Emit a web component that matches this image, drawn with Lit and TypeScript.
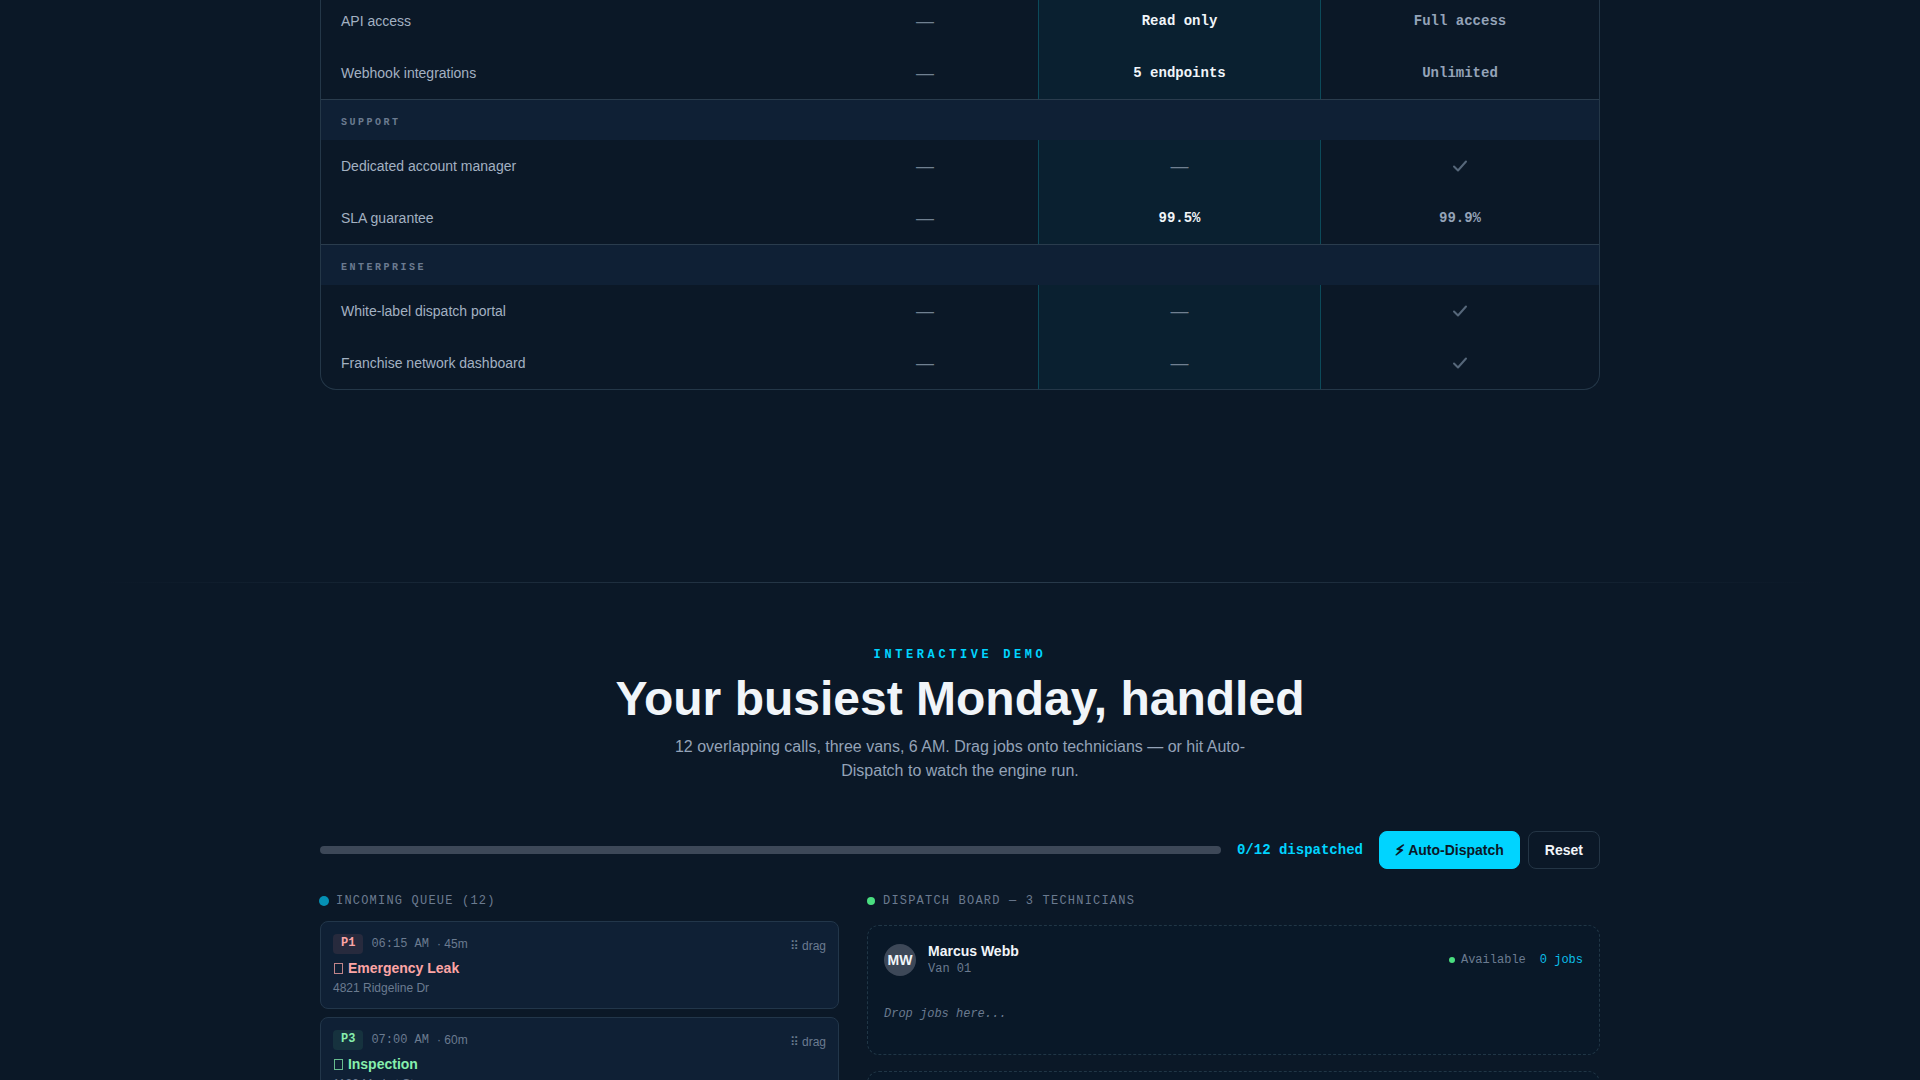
import { LitElement, html, css, svg } from "lit";
import { customElement, property, state } from "lit/decorators.js";
import { classMap } from "lit/directives/class-map.js";

type Row = { label: string; values: string[] };
type Group = { title?: string; rows: Row[] };
type Job = { priority: string; time: string; duration: string; title: string; address: string };
type Tech = { initials: string; name: string; van: string };

const GROUPS: Group[] = [
  {
    rows: [
      { label: "API access", values: ["—", "Read only", "Full access"] },
      { label: "Webhook integrations", values: ["—", "5 endpoints", "Unlimited"] },
    ],
  },
  {
    title: "Support",
    rows: [
      { label: "Dedicated account manager", values: ["—", "—", "check"] },
      { label: "SLA guarantee", values: ["—", "99.5%", "99.9%"] },
    ],
  },
  {
    title: "Enterprise",
    rows: [
      { label: "White-label dispatch portal", values: ["—", "—", "check"] },
      { label: "Franchise network dashboard", values: ["—", "—", "check"] },
    ],
  },
];

const JOBS: Job[] = [
  { priority: "P1", time: "06:15 AM", duration: "45m", title: "Emergency Leak", address: "4821 Ridgeline Dr" },
  { priority: "P3", time: "07:00 AM", duration: "60m", title: "Inspection", address: "1190 Market St" },
];

const TECHS: Tech[] = [{ initials: "MW", name: "Marcus Webb", van: "Van 01" }];

const check = svg`<svg class="check" viewBox="0 0 16 16" role="img" aria-label="Included">
  <path d="M2 7.5 6 11.5 14 2.5" fill="none" stroke="currentColor" stroke-width="2" stroke-linecap="round" stroke-linejoin="round"/>
</svg>`;

const box = svg`<svg class="box" viewBox="0 0 11 12" aria-hidden="true">
  <rect x="1.5" y="1.5" width="8" height="10" fill="none" stroke="currentColor" stroke-width="1" stroke-opacity="0.75"/>
</svg>`;

@customElement("plan-table")
class PlanTable extends LitElement {
  static styles = css`
    :host {
      display: block;
    }
    .frame {
      border: 1px solid #243748;
      border-top: 0;
      border-radius: 0 0 16px 16px;
      overflow: hidden;
    }
    .table {
      width: 100%;
      border-collapse: separate;
      border-spacing: 0;
      table-layout: fixed;
    }
    .c2 { width: 226px; }
    .c3 { width: 283px; }
    .c4 { width: 278px; }
    .cell {
      height: 52px;
      padding: 0 20px;
      font-size: 14px;
      line-height: 20px;
      text-align: center;
      box-sizing: border-box;
      color: #94a3b8;
    }
    .label {
      text-align: left;
      font-weight: 400;
      color: #a3b1c2;
    }
    .value {
      font-family: "Liberation Mono", monospace;
      font-weight: 700;
    }
    .featured {
      background: #0a2030;
      border-left: 1px solid #0c4a5a;
      border-right: 1px solid #0c4a5a;
      color: #f1f5f9;
    }
    .dash {
      font-size: 18px;
      color: #708091;
    }
    .group {
      height: 41px;
      padding: 6px 20px 0;
      box-sizing: border-box;
      border-top: 1px solid #2a3c4d;
      background: #0f2035;
      font: 700 10px/16px "Liberation Mono", monospace;
      letter-spacing: 2.5px;
      text-transform: uppercase;
      text-align: left;
      color: #6b7b90;
    }
    .check {
      display: inline-block;
      width: 16px;
      height: 16px;
      vertical-align: middle;
      color: #56677a;
    }
  `;

  private cell(value: string, index: number) {
    const isText = value !== "—" && value !== "check";
    return html`<td class=${classMap({ cell: true, featured: index === 1, value: isText })}>
      ${value === "check" ? check : value === "—" ? html`<span class="dash">—</span>` : value}
    </td>`;
  }

  render() {
    return html`<div class="frame">
      <table class="table">
        <colgroup>
          <col class="c1" /><col class="c2" /><col class="c3" /><col class="c4" />
        </colgroup>
        ${GROUPS.map(
          (g) => html`<tbody>
            ${g.title ? html`<tr><th class="group" colspan="4" scope="rowgroup">${g.title}</th></tr>` : ""}
            ${g.rows.map(
              (r) => html`<tr>
                <th class="cell label" scope="row">${r.label}</th>
                ${r.values.map((v, i) => this.cell(v, i))}
              </tr>`
            )}
          </tbody>`
        )}
      </table>
    </div>`;
  }
}

@customElement("job-card")
class JobCard extends LitElement {
  @property({ attribute: false }) job!: Job;

  static styles = css`
    :host {
      display: block;
    }
    .card {
      display: flex;
      justify-content: space-between;
      align-items: flex-start;
      padding: 12px 12px 11px;
      border: 1px solid #22364a;
      border-radius: 8px;
      background: #0f2035;
      cursor: grab;
      font-size: 12px;
      line-height: 18px;
      color: #6b7b90;
    }
    .meta {
      display: flex;
      align-items: center;
      gap: 8px;
      height: 20px;
    }
    .badge {
      padding: 1px 8px 3px;
      border-radius: 4px;
      font: 700 12px/16px "Liberation Mono", monospace;
    }
    .time {
      font: 12px/18px "Liberation Mono", monospace;
    }
    .title {
      margin-top: 3px;
      font-size: 14px;
      line-height: 22px;
      font-weight: 700;
    }
    .box {
      width: 11px;
      height: 12px;
      vertical-align: -1px;
    }
    .p1 { color: #fca5a5; }
    .p3 { color: #86efac; }
    .badge.p1 { background: #272a3d; }
    .badge.p3 { background: #16323e; }
    .drag {
      padding-top: 3px;
    }
  `;

  render() {
    const p = this.job.priority.toLowerCase();
    return html`<article class="card" draggable="true">
      <div>
        <div class="meta">
          <span class="badge ${p}">${this.job.priority}</span>
          <span class="time">${this.job.time}</span>
          <span>· ${this.job.duration}</span>
        </div>
        <div class="title ${p}">${box} ${this.job.title}</div>
        <div>${this.job.address}</div>
      </div>
      <span class="drag">⠿ drag</span>
    </article>`;
  }
}

@customElement("tech-card")
class TechCard extends LitElement {
  @property({ attribute: false }) tech?: Tech;

  static styles = css`
    :host {
      display: block;
    }
    .card {
      min-height: 130px;
      box-sizing: border-box;
      padding: 16px;
      border: 1px dashed #203646;
      border-radius: 12px;
      background: #091828;
      font: 12px/16px "Liberation Mono", monospace;
      color: #6b7b90;
    }
    .head {
      display: flex;
      align-items: center;
      gap: 12px;
    }
    .avatar {
      display: grid;
      place-items: center;
      width: 32px;
      height: 32px;
      border-radius: 50%;
      background: #3d4858;
      font: 700 14px/20px "Liberation Sans", sans-serif;
      color: #f1f5f9;
    }
    .who {
      flex: 1;
    }
    .name {
      font: 700 14px/18px "Liberation Sans", sans-serif;
      color: #f1f5f9;
    }
    .van {
      line-height: 18px;
    }
    .status {
      display: flex;
      align-items: center;
      gap: 6px;
    }
    .dot {
      width: 6px;
      height: 6px;
      border-radius: 50%;
      background: #4ade80;
    }
    .jobs {
      padding-left: 8px;
      color: #0bbfe8;
    }
    .drop {
      padding-top: 28px;
      font-style: italic;
    }
  `;

  render() {
    if (!this.tech) return html`<article class="card"></article>`;
    return html`<article class="card">
      <div class="head">
        <div class="avatar">${this.tech.initials}</div>
        <div class="who">
          <div class="name">${this.tech.name}</div>
          <div class="van">${this.tech.van}</div>
        </div>
        <div class="status">
          <span class="dot"></span><span>Available</span><span class="jobs">0 jobs</span>
        </div>
      </div>
      <div class="drop">Drop jobs here...</div>
    </article>`;
  }
}

@customElement("app-root")
class AppRoot extends LitElement {
  @state() private dispatched = 0;

  static styles = css`
    :host {
      display: block;
      height: 100vh;
      overflow: hidden;
      background: #0b1827;
      font-family: "Liberation Sans", sans-serif;
      color: #f1f5f9;
    }
    .container {
      max-width: 1280px;
      margin: 0 auto;
    }
    .plans {
      margin-top: -5px;
      padding-bottom: 192px;
    }
    .rule {
      height: 1px;
      margin: 0 5%;
      background: linear-gradient(90deg, transparent, #2b3d4e, transparent);
    }
    .demo {
      padding-top: 63px;
    }
    .intro {
      display: flex;
      flex-direction: column;
      align-items: center;
      text-align: center;
    }
    .eyebrow {
      font: 700 12px/18px "Liberation Mono", monospace;
      letter-spacing: 3.6px;
      text-transform: uppercase;
      color: #00d4ff;
    }
    .heading {
      margin: 11px 0 12px;
      font-size: 48px;
      line-height: 48px;
      font-weight: 700;
    }
    .lead {
      max-width: 576px;
      margin: 0;
      font-size: 16px;
      line-height: 24px;
      color: #94a3b8;
    }
    .toolbar {
      display: flex;
      align-items: center;
      gap: 16px;
      margin-top: 48px;
    }
    .track {
      flex: 1;
      height: 8px;
      border-radius: 4px;
      overflow: hidden;
      background: #3d4858;
    }
    .fill {
      height: 100%;
      background: #00d4ff;
    }
    .count {
      font: 700 14px/20px "Liberation Mono", monospace;
      color: #00d4ff;
    }
    .actions {
      display: flex;
      gap: 8px;
    }
    .button {
      height: 38px;
      padding: 0 16px;
      border: 1px solid #243545;
      border-radius: 8px;
      background: transparent;
      font: 700 14px/20px "Liberation Sans", sans-serif;
      color: #f1f5f9;
      cursor: pointer;
    }
    .primary {
      padding: 0 15px;
      border-color: #00d4ff;
      background: #00d4ff;
      color: #0b1827;
    }
    .bolt {
      font-family: "DejaVu Sans", sans-serif;
      line-height: 16px;
      -webkit-text-stroke: 1px currentColor;
    }
    .board {
      display: grid;
      grid-template-columns: 519fr 733fr;
      gap: 28px;
      margin-top: 23px;
    }
    .caption {
      display: flex;
      align-items: center;
      gap: 8px;
      margin: 0;
      font: 400 12px/18px "Liberation Mono", monospace;
      letter-spacing: 1.2px;
      text-transform: uppercase;
      color: #6b7b90;
    }
    .dot {
      width: 8px;
      height: 8px;
      border-radius: 50%;
      background: #4ade80;
    }
    .live {
      background: #0590b4;
      box-shadow: 0 0 0 1px #0590b4;
    }
    .list {
      display: flex;
      flex-direction: column;
      gap: 8px;
      margin-top: 11px;
    }
    .techs {
      gap: 16px;
      margin-top: 15px;
    }
  `;

  render() {
    return html`
      <section class="container plans"><plan-table></plan-table></section>
      <div class="rule"></div>
      <section class="container demo">
        <header class="intro">
          <div class="eyebrow">Interactive demo</div>
          <h2 class="heading">Your busiest Monday, handled</h2>
          <p class="lead">
            12 overlapping calls, three vans, 6 AM. Drag jobs onto technicians — or hit Auto-Dispatch to watch the
            engine run.
          </p>
        </header>
        <div class="toolbar">
          <div class="track"><div class="fill" style="width:${(this.dispatched / 12) * 100}%"></div></div>
          <span class="count">${this.dispatched}/12 dispatched</span>
          <div class="actions">
            <button class="button primary" @click=${() => (this.dispatched = 12)}>
              <span class="bolt">⚡&#xFE0E;</span> Auto-Dispatch
            </button>
            <button class="button" @click=${() => (this.dispatched = 0)}>Reset</button>
          </div>
        </div>
        <div class="board">
          <section>
            <h3 class="caption"><span class="dot live"></span>Incoming queue (12)</h3>
            <div class="list">${JOBS.map((j) => html`<job-card .job=${j}></job-card>`)}</div>
          </section>
          <section>
            <h3 class="caption"><span class="dot"></span>Dispatch board — 3 technicians</h3>
            <div class="list techs">
              ${TECHS.map((t) => html`<tech-card .tech=${t}></tech-card>`)}
              <tech-card></tech-card>
            </div>
          </section>
        </div>
      </section>
    `;
  }
}
